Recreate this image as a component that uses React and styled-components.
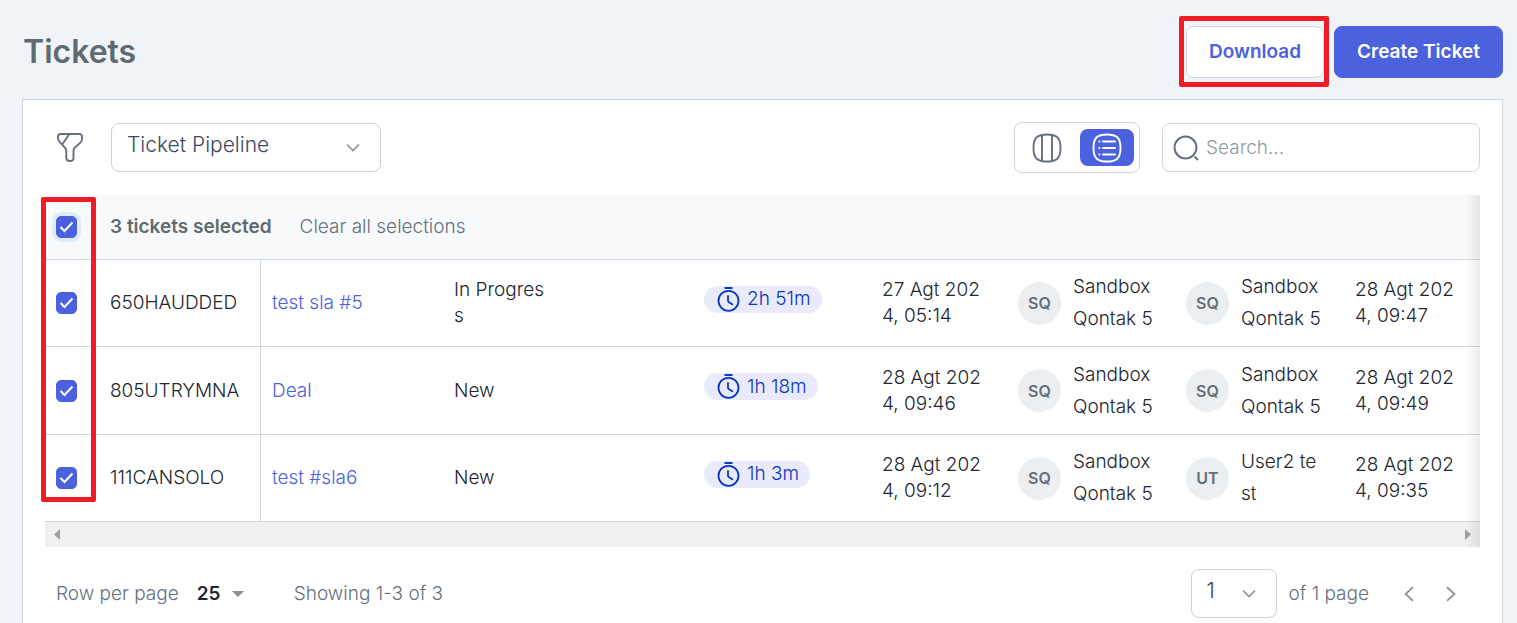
import React from 'react'
import styled, { createGlobalStyle, css } from 'styled-components'

const colors = {
  page: '#f0f4f9',
  primary: '#4b61dd',
  link: '#4b61dd',
  line: '#cfd6df',
  text: '#212630',
  muted: '#656f7d',
  sla: '#0a36c4',
  slaBackground: '#e9eafb',
  highlight: '#ee1c25',
}

const GlobalStyle = createGlobalStyle`
  *,
  *::before,
  *::after {
    box-sizing: border-box;
  }

  body {
    margin: 0;
    background: ${colors.page};
    color: ${colors.text};
    font-family: Inter, 'Liberation Sans', sans-serif;
    font-size: 19px;
    font-weight: 300;
    line-height: 26px;
  }

  button,
  input,
  select {
    margin: 0;
    font: inherit;
    color: inherit;
  }

  svg {
    display: block;
    flex: none;
  }
`

const Page = styled.main`
  display: flex;
  flex-direction: column;
  min-height: 100vh;
  padding: 26px 14px 0 22px;
`

const Header = styled.header`
  display: flex;
  align-items: center;
  justify-content: space-between;
  margin-bottom: 21px;
`

const Title = styled.h1`
  margin: 0 0 0 1px;
  color: #5f6b70;
  font-size: 32px;
  font-weight: 600;
  line-height: 40px;
`

const Actions = styled.div`
  display: flex;
  gap: 10px;
`

const Button = styled.button`
  height: 52px;
  padding: 0 22px;
  border: 1px solid ${({ $primary }) => ($primary ? colors.primary : colors.line)};
  border-radius: 8px;
  background: ${({ $primary }) => ($primary ? colors.primary : '#fff')};
  color: ${({ $primary }) => ($primary ? '#fff' : colors.primary)};
  font-weight: 600;
  cursor: pointer;
`

const highlight = css`
  content: '';
  position: absolute;
  border: 5px solid ${colors.highlight};
  border-radius: 2px;
  pointer-events: none;
`

const HighlightedAction = styled.div`
  position: relative;

  &::after {
    ${highlight}
    inset: -10px -5px -9px -7px;
  }
`

const Card = styled.section`
  flex: 1;
  padding: 22px 22px 5px;
  border: 1px solid ${colors.line};
  border-bottom: 0;
  background: #fff;
`

const Toolbar = styled.div`
  display: flex;
  align-items: center;
  height: 51px;
  margin-bottom: 22px;
`

const IconButton = styled.button`
  display: grid;
  place-items: center;
  padding: 0;
  border: 0;
  background: none;
  color: ${colors.muted};
  cursor: pointer;
`

const FilterButton = styled(IconButton)`
  margin: 0 27px 0 11px;
`

const SelectBox = styled.label`
  display: grid;
  align-items: center;
  width: ${({ $width }) => $width}px;

  > * {
    grid-area: 1 / 1;
  }

  > svg {
    justify-self: end;
    margin-right: ${({ $inset }) => $inset}px;
    pointer-events: none;
  }
`

const Select = styled.select`
  appearance: none;
  width: 100%;
  height: 49px;
  padding: 0 15px 5px;
  border: 1px solid #cfd0d3;
  border-radius: 8px;
  background: #fff;
  color: #3c4760;
  font-size: 21px;
`

const PlainSelect = styled.select`
  appearance: none;
  width: 100%;
  padding: 0;
  border: 0;
  background: none;
  color: ${colors.text};
  font-weight: 600;
`

const ViewSwitch = styled.div`
  display: flex;
  gap: 6px;
  height: 51px;
  margin: 0 22px 0 auto;
  padding: 6px 5px;
  border: 1px solid ${colors.line};
  border-radius: 8px;
`

const ViewButton = styled(IconButton)`
  width: 54px;
  border-radius: 8px;
  background: ${({ $active }) => ($active ? colors.primary : 'none')};
  color: ${({ $active }) => ($active ? '#fff' : colors.muted)};
`

const Search = styled.label`
  display: flex;
  align-items: center;
  gap: 7px;
  width: 318px;
  height: 49px;
  padding: 0 10px;
  border: 1px solid ${colors.line};
  border-radius: 8px;
  color: ${colors.muted};
`

const SearchInput = styled.input`
  flex: 1;
  min-width: 0;
  padding: 0;
  border: 0;
  outline: 0;
  background: none;

  &::placeholder {
    color: #8f98a8;
    opacity: 1;
  }
`

const TableArea = styled.div`
  position: relative;

  &::before {
    ${highlight}
    top: 2px;
    bottom: 45px;
    left: -4px;
    width: 55px;
    z-index: 1;
  }

  &::after {
    content: '';
    position: absolute;
    inset: 0 0 0 auto;
    width: 14px;
    background: linear-gradient(to right, rgba(0, 0, 0, 0), rgba(0, 0, 0, 0.08));
    pointer-events: none;
  }
`

const Table = styled.table`
  width: 100%;
  border-spacing: 0;
  table-layout: fixed;
`

const HeadCell = styled.th`
  height: 65px;
  padding: 0 0 0 ${({ $check }) => ($check ? 11 : 12)}px;
  border-bottom: 1px solid ${colors.line};
  background: #f8f9fb;
  text-align: left;
  font-weight: 600;
  color: #5f6b70;
`

const Cell = styled.td`
  height: 87px;
  padding: 0 0 0 ${({ $check }) => ($check ? 11 : 12)}px;
  border-bottom: 1px solid ${colors.line};
  border-right: ${({ $divided }) => ($divided ? `1px solid ${colors.line}` : 0)};

  tr:nth-child(2) > & {
    height: 88px;
  }
`

const Wrapped = styled.div`
  width: ${({ $width }) => $width}px;
  line-height: ${({ $loose }) => ($loose ? 32 : 26)}px;
  word-break: break-all;
`

const ClearButton = styled.button`
  margin-left: 28px;
  padding: 0;
  border: 0;
  background: none;
  color: ${colors.muted};
  font-weight: 300;
  cursor: pointer;
`

const CheckLabel = styled.label`
  display: grid;
  place-items: center;
  width: 21px;
  height: 22px;

  > * {
    grid-area: 1 / 1;
  }

  > svg {
    pointer-events: none;
  }
`

const CheckInput = styled.input`
  appearance: none;
  width: 21px;
  height: 22px;
  border: 1px solid ${colors.primary};
  border-radius: 5px;
  box-shadow: ${({ $focused }) => ($focused ? '0 0 0 4px #e0ecfc' : 'none')};

  &:checked {
    background: ${colors.primary};
  }
`

const TicketLink = styled.a`
  color: ${colors.link};
  text-decoration: none;
`

const Sla = styled.span`
  display: inline-flex;
  align-items: center;
  gap: 7px;
  height: 27px;
  margin-bottom: 8px;
  padding: 0 11px 0 13px;
  border-radius: 14px;
  background: ${colors.slaBackground};
  color: ${colors.sla};
  vertical-align: middle;
`

const Person = styled.div`
  display: flex;
  align-items: center;
  gap: 12px;
`

const Avatar = styled.span`
  display: grid;
  place-items: center;
  flex: none;
  width: 43px;
  height: 43px;
  border-radius: 50%;
  background: #ebeff2;
  color: ${colors.muted};
  font-size: 16px;
  font-weight: 600;
`

const ScrollBar = styled.div`
  display: flex;
  align-items: center;
  justify-content: space-between;
  height: 25px;
  padding: 0 9px;
  background: #f0f0f0;
`

const Footer = styled.footer`
  display: flex;
  align-items: center;
  margin-top: 22px;
  padding: 0 21px 0 11px;
  color: ${colors.muted};
`

const RowsPerPage = styled.div`
  display: flex;
  align-items: center;
  gap: 18px;
  margin-right: 50px;
`

const Pager = styled.div`
  display: flex;
  align-items: center;
  gap: 12px;
  margin-left: auto;
`

const PagerArrows = styled.div`
  display: flex;
  gap: 26px;
  margin-left: 20px;
`

const FilterIcon = () => (
  <svg width="28" height="30" viewBox="0 0 28 30" fill="none" stroke="currentColor" strokeWidth="1.900" strokeLinejoin="round">
    <path d="M4.500 1h19A2.500 2.500 0 0 1 26 3.500v2.800c0 1.200-.5 2.200-1.400 3.100l-5.400 4.800c-1 .9-1.700 2-1.700 3.400v7.600c0 1.700-1.500 2.800-3.800 2.800-2.400 0-3.400-1.200-3.400-3.200v-6.500c0-1.500-.4-2.500-1.200-3.400L3.600 8.800C2.600 7.600 2 6.600 2 5.200V3.500A2.500 2.500 0 0 1 4.500 1Z" />
    <path d="M13 1.500 6.500 11" />
  </svg>
)

const squircle =
  'M15 1.500c-9.500 0-13.500 3-13.500 13.500S5.500 28.500 15 28.500s13.500-3 13.500-13.500S24.500 1.500 15 1.500Z'

const BoardIcon = () => (
  <svg width="30" height="30" viewBox="0 0 30 30" fill="none" stroke="currentColor" strokeWidth="1.900">
    <path d={squircle} />
    <path d="M10 2v26M20 2v26" />
  </svg>
)

const ListIcon = () => (
  <svg width="30" height="30" viewBox="0 0 30 30" fill="none" stroke="currentColor" strokeWidth="1.900" strokeLinecap="round">
    <path d={squircle} />
    <path d="M11 8.500h12M11 15h12M11 21.500h12M7.300 8.500h.2M7.300 15h.2M7.300 21.500h.2" />
  </svg>
)

const SearchIcon = () => (
  <svg width="26" height="26" viewBox="0 0 26 26" fill="none" stroke="currentColor" strokeWidth="1.900">
    <circle cx="12.500" cy="12.500" r="11" />
    <path d="m21.500 21.500 3.500 3.500" />
  </svg>
)

const TimerIcon = () => (
  <svg width="23" height="25" viewBox="0 0 23 25" fill="none" stroke="currentColor" strokeWidth="1.800">
    <circle cx="11.500" cy="13.800" r="10" />
    <path d="M7.500 1h8M11 8.200v5.200c0 .8.400 1.400 1 1.800l4 2.600" />
  </svg>
)

const Chevron = ({ direction = 'down', size = 14 }) => {
  const paths = {
    down: 'm1 3.500 6 6 6-6',
    left: 'M10.500 1 4 7l6.500 6',
    right: 'M3.500 1 10 7l-6.500 6',
  }
  return (
    <svg width={size} height={size} viewBox="0 0 14 14" fill="none" stroke="#8c929c" strokeWidth="1.600">
      <path d={paths[direction]} />
    </svg>
  )
}

const Triangle = ({ points, width, height, color = '#a0a0a0' }) => (
  <svg width={width} height={height} fill={color}>
    <polygon points={points} />
  </svg>
)

const Checkbox = ({ label, focused }) => (
  <CheckLabel>
    <CheckInput type="checkbox" aria-label={label} defaultChecked $focused={focused} />
    <svg width="15" height="12" viewBox="0 0 15 12" fill="none" stroke="#fff" strokeWidth="2">
      <path d="m1.500 6 4 4L13.500 1.500" />
    </svg>
  </CheckLabel>
)

const PersonCell = ({ initials, name }) => (
  <Cell>
    <Person>
      <Avatar>{initials}</Avatar>
      <Wrapped $width={84} $loose>
        {name}
      </Wrapped>
    </Person>
  </Cell>
)

const columns = [53, 163, 181, 118, 132, 178, 136, 168, 169]

const sandbox = { initials: 'SQ', name: 'Sandbox Qontak 5' }

const tickets = [
  {
    id: '650HAUDDED',
    name: 'test sla #5',
    stage: 'In Progress',
    sla: '2h 51m',
    created: '27 Agt 2024, 05:14',
    creator: sandbox,
    owner: sandbox,
    updated: '28 Agt 2024, 09:47',
  },
  {
    id: '805UTRYMNA',
    name: 'Deal',
    stage: 'New',
    sla: '1h 18m',
    created: '28 Agt 2024, 09:46',
    creator: sandbox,
    owner: sandbox,
    updated: '28 Agt 2024, 09:49',
  },
  {
    id: '111CANSOLO',
    name: 'test #sla6',
    stage: 'New',
    sla: '1h 3m',
    created: '28 Agt 2024, 09:12',
    creator: sandbox,
    owner: { initials: 'UT', name: 'User2 test' },
    updated: '28 Agt 2024, 09:35',
  },
]

const TicketRow = ({ ticket }) => (
  <tr>
    <Cell $check>
      <Checkbox label={`Select ${ticket.id}`} />
    </Cell>
    <Cell $divided>{ticket.id}</Cell>
    <Cell $check>
      <TicketLink href="#ticket">{ticket.name}</TicketLink>
    </Cell>
    <Cell>
      <Wrapped $width={94}>{ticket.stage}</Wrapped>
    </Cell>
    <Cell />
    <Cell>
      <Sla>
        <TimerIcon />
        {ticket.sla}
      </Sla>
    </Cell>
    <Cell>
      <Wrapped $width={104}>{ticket.created}</Wrapped>
    </Cell>
    <PersonCell {...ticket.creator} />
    <PersonCell {...ticket.owner} />
    <Cell>
      <Wrapped $width={104}>{ticket.updated}</Wrapped>
    </Cell>
  </tr>
)

const App = () => (
  <>
    <GlobalStyle />
    <Page>
      <Header>
        <Title>Tickets</Title>
        <Actions>
          <HighlightedAction>
            <Button type="button">Download</Button>
          </HighlightedAction>
          <Button type="button" $primary>
            Create Ticket
          </Button>
        </Actions>
      </Header>
      <Card>
        <Toolbar>
          <FilterButton type="button" aria-label="Filter">
            <FilterIcon />
          </FilterButton>
          <SelectBox $width={270} $inset={21}>
            <Select aria-label="Pipeline">
              <option>Ticket Pipeline</option>
            </Select>
            <Chevron />
          </SelectBox>
          <ViewSwitch>
            <ViewButton type="button" aria-label="Board view">
              <BoardIcon />
            </ViewButton>
            <ViewButton type="button" aria-label="List view" $active>
              <ListIcon />
            </ViewButton>
          </ViewSwitch>
          <Search>
            <SearchIcon />
            <SearchInput type="text" placeholder="Search..." aria-label="Search" />
          </Search>
        </Toolbar>
        <TableArea>
          <Table>
            <colgroup>
              {columns.map((width, index) => (
                <col key={index} width={width} />
              ))}
              <col />
            </colgroup>
            <thead>
              <tr>
                <HeadCell $check>
                  <Checkbox label="Select all" focused />
                </HeadCell>
                <HeadCell colSpan={9}>
                  3 tickets selected
                  <ClearButton type="button">Clear all selections</ClearButton>
                </HeadCell>
              </tr>
            </thead>
            <tbody>
              {tickets.map(ticket => (
                <TicketRow key={ticket.id} ticket={ticket} />
              ))}
            </tbody>
          </Table>
          <ScrollBar>
            <Triangle width={6} height={11} points="6,0 6,11 0,5.500" />
            <Triangle width={6} height={11} points="0,0 0,11 6,5.500" />
          </ScrollBar>
        </TableArea>
        <Footer>
          <RowsPerPage>
            <label htmlFor="rows">Row per page</label>
            <SelectBox $width={47} $inset={0}>
              <PlainSelect id="rows">
                <option>25</option>
              </PlainSelect>
              <Triangle width={12} height={6} points="0,0 12,0 6,6" color="#8f8f8f" />
            </SelectBox>
          </RowsPerPage>
          <span>Showing 1-3 of 3</span>
          <Pager>
            <SelectBox $width={86} $inset={21}>
              <Select aria-label="Page">
                <option>1</option>
              </Select>
              <Chevron />
            </SelectBox>
            <span>of 1 page</span>
            <PagerArrows>
              <IconButton type="button" aria-label="Previous page">
                <Chevron direction="left" size={16} />
              </IconButton>
              <IconButton type="button" aria-label="Next page">
                <Chevron direction="right" size={16} />
              </IconButton>
            </PagerArrows>
          </Pager>
        </Footer>
      </Card>
    </Page>
  </>
)

export default App
